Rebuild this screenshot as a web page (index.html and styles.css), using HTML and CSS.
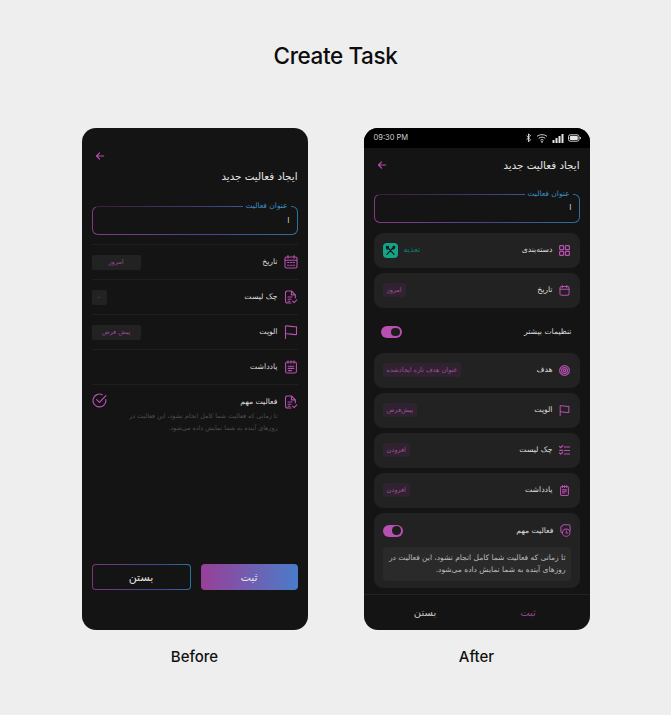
FILE: index.html
```html
<!DOCTYPE html>
<html lang="en">
<head>
<meta charset="utf-8">
<title>Create Task</title>
<link rel="stylesheet" href="styles.css">
</head>
<body>
<svg class="defs" width="0" height="0" aria-hidden="true">
  <defs>
    <symbol id="i-back" viewBox="0 0 12 12"><path d="M10.500 6H2M5.500 2.200 1.800 6l3.700 3.800"/></symbol>
    <symbol id="i-cal" viewBox="0 0 14 14"><rect x="1" y="2" width="12" height="11" rx="1.500"/><path d="M1 5.200h12M4 .6v2.600M10 .6v2.600"/><path class="dots" d="M3.500 7.500h1.400M6.300 7.500h1.400M9.100 7.500h1.400M3.500 10.200h1.400M6.300 10.200h1.400M9.100 10.200h1.400"/></symbol>
    <symbol id="i-cal2" viewBox="0 0 14 14"><rect x="1.200" y="2" width="11.600" height="11" rx="2"/><path d="M1.200 5.400h11.600M4.200.8v2.400M9.800.8v2.400"/></symbol>
    <symbol id="i-doc" viewBox="0 0 14 14"><path d="M7 13H3.200A1.700 1.700 0 0 1 1.500 11.300V2.700A1.700 1.700 0 0 1 3.200 1h4.300l3.800 3.800V8"/><path d="M7.400 1.200v3.700h3.700M4 7h4M4 9.300h3M4 11.300h2M8.600 11.200l1.500 1.500 2.700-2.900"/></symbol>
    <symbol id="i-flag" viewBox="0 0 14 14"><path d="M1.500 13.500V1c3.600-.6 7 1.300 11 .7v7.800c-4 .6-7.400-1.300-11-.7"/></symbol>
    <symbol id="i-note" viewBox="0 0 14 14"><rect x="1.600" y="2" width="10.800" height="11" rx="1.600"/><path d="M4 .7v2.600M7 .7v2.600M10 .7v2.600M4.200 6.200h5.600M4.200 8.400h5.600M4.200 10.600h3.400"/></symbol>
    <symbol id="i-check" viewBox="0 0 14 14"><path d="M12.900 6.200A6 6 0 1 1 9.600 1.600"/><path d="M4.300 6.200 7 8.800l6-6.400"/></symbol>
    <symbol id="i-grid" viewBox="0 0 12 12"><rect x=".7" y=".7" width="4.300" height="4.300" rx=".7"/><rect x="7" y=".7" width="4.300" height="4.300" rx=".7"/><rect x=".7" y="7" width="4.300" height="4.300" rx=".7"/><rect x="7" y="7" width="4.300" height="4.300" rx=".7"/></symbol>
    <symbol id="i-cut" viewBox="0 0 15 15"><path d="M3.400 3 11.600 12M11.600 3 3.400 12M10.400 2.800c1.300-.6 2.200 0 2 1.300-.2 1-1.200 1.800-2.400 1.500M3 2.600v2.200c0 .8.600 1.200 1.400 1.200M5 2.600v2.200"/></symbol>
    <symbol id="i-target" viewBox="0 0 12 12"><circle cx="6" cy="6" r="5.300"/><circle cx="6" cy="6" r="3.200"/><circle cx="6" cy="6" r="1.200"/></symbol>
    <symbol id="i-list" viewBox="0 0 12 12"><path d="M5.800 2.200h5.700M5.800 6h5.700M5.800 9.800h5.700M.6 1.600l1.300 1.300L4 .8M.6 8.700 1.900 10 4 7.900M.8 5.800h3"/></symbol>
    <symbol id="i-memo" viewBox="0 0 12 14"><rect x="1" y="2" width="10" height="11.300" rx="1.600"/><path d="M3.500 .8v2.400M6 .8v2.400M8.500 .8v2.400M3.400 6h5.200M3.400 8h5.200M3.400 10.200h3.200"/></symbol>
    <symbol id="i-clock" viewBox="0 0 14 14"><path d="M3.500 9.500 2 8.500V3.300L4.800 .8h5.400A1.800 1.800 0 0 1 12 2.600V7"/><circle cx="7.800" cy="9.300" r="4"/><path d="M7.800 7.400v2.200h1.700"/></symbol>
  </defs>
</svg>
<main class="page">
  <h1 class="page-title">Create Task</h1>
  <div class="compare">
    <section class="col">
      <div class="phone phone-before" dir="rtl">
        <div class="back-line"><svg class="ico ico-back"><use href="#i-back"/></svg></div>
        <h2 class="screen-title title-before">ایجاد فعالیت جدید</h2>
        <div class="field">
          <span class="field-label">عنوان فعالیت</span>
          <span class="field-value">ا</span>
        </div>
        <div class="plain-list">
          <div class="plain-row">
            <svg class="ico ico-big"><use href="#i-cal"/></svg>
            <span class="label">تاریخ</span>
            <span class="tag tag-wide">امروز</span>
          </div>
          <div class="plain-row">
            <svg class="ico ico-big"><use href="#i-doc"/></svg>
            <span class="label">چک لیست</span>
            <span class="tag tag-small">۰</span>
          </div>
          <div class="plain-row">
            <svg class="ico ico-big"><use href="#i-flag"/></svg>
            <span class="label">الویت</span>
            <span class="tag tag-wide">پیش فرض</span>
          </div>
          <div class="plain-row">
            <svg class="ico ico-big"><use href="#i-note"/></svg>
            <span class="label">یادداشت</span>
          </div>
          <div class="plain-row plain-important">
            <svg class="ico ico-big"><use href="#i-doc"/></svg>
            <div class="important-text">
              <span class="label">فعالیت مهم</span>
              <p class="muted">تا زمانی که فعالیت شما کامل انجام نشود، این فعالیت در روزهای آینده به شما نمایش داده می‌شود.</p>
            </div>
            <svg class="ico ico-circle"><use href="#i-check"/></svg>
          </div>
        </div>
        <div class="btn-row">
          <button class="btn btn-fill" type="button">ثبت</button>
          <button class="btn btn-outline" type="button">بستن</button>
        </div>
      </div>
      <p class="caption">Before</p>
    </section>

    <section class="col">
      <div class="phone phone-after">
        <div class="status">
          <span class="time">09:30 PM</span>
          <svg class="status-icons" viewBox="0 0 56 10" width="56" height="10">
            <path class="st" d="M1.500 2.800 5.500 6.700 3.500 8.800V.8l2 2.100-4 3.900"/>
            <path class="st" d="M12 3.400c2.800-2.300 7.200-2.300 10 0M13.700 5.300c1.900-1.500 4.700-1.500 6.600 0M15.400 7.200c.9-.7 2.300-.7 3.200 0"/>
            <circle class="sf" cx="17" cy="8.800" r=".9"/>
            <rect class="sf" x="27.500" y="7" width="2" height="3"/>
            <rect class="sf" x="30.500" y="5" width="2" height="5"/>
            <rect class="sf" x="33.500" y="3" width="2" height="7"/>
            <rect class="sf" x="36.500" y="1" width="2" height="9"/>
            <rect class="st" x="43.500" y="1.800" width="10.500" height="6.400" rx="1.800"/>
            <rect class="sf" x="44.800" y="3" width="8" height="4" rx="1"/>
            <rect class="sf" x="54.800" y="4" width="1" height="2"/>
          </svg>
        </div>
        <div class="after-body" dir="rtl">
          <div class="after-head">
            <h2 class="screen-title">ایجاد فعالیت جدید</h2>
            <svg class="ico ico-back"><use href="#i-back"/></svg>
          </div>
          <div class="field">
            <span class="field-label">عنوان فعالیت</span>
            <span class="field-value">ا</span>
          </div>
          <div class="stack">
            <div class="card">
              <svg class="ico ico-card"><use href="#i-grid"/></svg>
              <span class="label">دسته‌بندی</span>
              <span class="teal-text">تغذیه</span>
              <span class="teal-box"><svg class="ico-cut"><use href="#i-cut"/></svg></span>
            </div>
            <div class="card">
              <svg class="ico ico-card"><use href="#i-cal2"/></svg>
              <span class="label">تاریخ</span>
              <span class="chip">امروز</span>
            </div>
            <div class="toggle-line">
              <span class="label">تنظیمات بیشتر</span>
              <span class="switch"><span class="knob"></span></span>
            </div>
            <div class="card">
              <svg class="ico ico-card"><use href="#i-target"/></svg>
              <span class="label">هدف</span>
              <span class="chip">عنوان هدف تازه ایجادشده</span>
            </div>
            <div class="card">
              <svg class="ico ico-card"><use href="#i-flag"/></svg>
              <span class="label">الویت</span>
              <span class="chip">پیش‌فرض</span>
            </div>
            <div class="card">
              <svg class="ico ico-card"><use href="#i-list"/></svg>
              <span class="label">چک لیست</span>
              <span class="chip">افزودن</span>
            </div>
            <div class="card">
              <svg class="ico ico-card"><use href="#i-memo"/></svg>
              <span class="label">یادداشت</span>
              <span class="chip">افزودن</span>
            </div>
            <div class="card card-tall">
              <div class="card-top">
                <svg class="ico ico-clock"><use href="#i-clock"/></svg>
                <span class="label">فعالیت مهم</span>
                <span class="switch switch-inner"><span class="knob"></span></span>
              </div>
              <p class="info">تا زمانی که فعالیت شما کامل انجام نشود، این فعالیت در روزهای آینده به شما نمایش داده می‌شود.</p>
            </div>
          </div>
        </div>
        <div class="footer" dir="rtl">
          <span class="foot-main">ثبت</span>
          <span class="foot-close">بستن</span>
        </div>
      </div>
      <p class="caption">After</p>
    </section>
  </div>
</main>
</body>
</html>
```
FILE: styles.css
```css
* { box-sizing: border-box; }
html, body { margin: 0; padding: 0; }
body {
  background: #eeeeee;
  font-family: "DejaVu Sans", "Noto Sans", sans-serif;
  width: 671px;
  height: 715px;
  overflow: hidden;
}
.defs { position: absolute; }
.page {
  display: flex;
  flex-direction: column;
  align-items: center;
  padding-top: 41px;
}
.page-title {
  margin: 0 0 57px;
  height: 30px;
  font: 500 22.500px/30px Inter, sans-serif;
  color: #0c0c0c;
  letter-spacing: -0.4px;
}
.compare { display: flex; gap: 56px; }
.col { width: 226px; display: flex; flex-direction: column; align-items: center; }
.caption {
  margin: 18px 0 0;
  font: 500 15px/18px Inter, sans-serif;
  color: #111;
}
.phone {
  width: 226px;
  height: 502px;
  background: #141414;
  border-radius: 14px;
  overflow: hidden;
  display: flex;
  flex-direction: column;
}
.phone-before { padding: 0 10px; }

.ico {
  fill: none;
  stroke: #b84fb0;
  stroke-width: 1.100;
  stroke-linecap: round;
  stroke-linejoin: round;
  flex: none;
  display: block;
}
.back-line { height: 10px; margin-top: 23px; display: flex; justify-content: flex-end; padding-left: 3px; }
.ico-back { width: 10px; height: 10px; stroke-width: 1.300; }
.after-head .ico-back { margin-left: 3px; }
.screen-title {
  margin: 0;
  font-size: 10.300px;
  line-height: 14px;
  font-weight: 400;
  color: #e8e8e8;
}
.title-before { margin-top: 8px; }

.field {
  position: relative;
  height: 29px;
  border: 1px solid transparent;
  border-radius: 6px;
  background:
    linear-gradient(#141414, #141414) padding-box,
    linear-gradient(90deg, rgba(20, 20, 20, .7), rgba(20, 20, 20, 0) 75%) top / 100% 1px no-repeat border-box,
    linear-gradient(70deg, #843a80 0%, #47458f 55%, #2a749f 100%) border-box;
  display: flex;
  align-items: center;
  padding: 0 7px;
}
.phone-before .field { margin-top: 23px; }
.field-label {
  position: absolute;
  top: -6px;
  right: 6px;
  padding: 0 3px;
  background: #141414;
  font-size: 7.500px;
  line-height: 10px;
  color: #3d8fc4;
}
.field-value { font-size: 8px; line-height: 10px; color: #d8d8d8; }

.plain-list { margin-top: 9px; display: flex; flex-direction: column; }
.plain-row {
  height: 35px;
  border-top: 1px solid #1f1f1f;
  display: flex;
  align-items: center;
}
.ico-big { width: 14px; height: 14px; margin-left: 6px; }
.label { font-size: 7.700px; line-height: 12px; color: #dcdcdc; white-space: nowrap; }
.tag {
  margin-right: auto;
  height: 15px;
  border-radius: 2px;
  background: #222222;
  color: #9a4696;
  font-size: 6.500px;
  line-height: 15px;
  text-align: center;
  display: block;
}
.tag-wide { width: 49px; }
.tag-small { width: 15px; font-size: 8px; }
.plain-important { align-items: flex-start; height: 60px; padding-top: 10px; }
.important-text { width: 160px; }
.important-text .label { display: block; margin-top: 1px; }
.muted {
  margin: 2px 0 0;
  font-size: 6.300px;
  line-height: 12px;
  color: #4f4f4f;
}
.ico-circle { width: 15px; height: 15px; margin-right: auto; margin-top: -2px; stroke-width: 1.100; }

.btn-row { margin-top: auto; margin-bottom: 40px; display: flex; gap: 10px; }
.btn {
  flex: 1;
  height: 26px;
  border-radius: 4px;
  font-family: inherit;
  font-size: 11px;
  color: #e6e6e6;
  padding: 0;
}
.btn-fill {
  border: 0;
  background: linear-gradient(90deg, #983f98, #4a7cc9);
}
.btn-outline {
  border: 1px solid transparent;
  background:
    linear-gradient(#141414, #141414) padding-box,
    linear-gradient(90deg, #7d3679, #3a4a92 70%, #2a749f) border-box;
}

.status {
  height: 20px;
  background: #000;
  flex: none;
  display: flex;
  align-items: center;
  justify-content: space-between;
  padding: 0 9px 0 10px;
}
.time { font: 400 7.500px/10px Inter, sans-serif; color: #cfcfcf; }
.st { fill: none; stroke: #e6e6e6; stroke-width: .9; }
.sf { fill: #e6e6e6; }

.after-body { padding: 0 10px; flex: none; }
.after-head {
  height: 20px;
  margin-top: 7px;
  display: flex;
  align-items: center;
  justify-content: space-between;
}
.after-body .field { margin-top: 18.500px; height: 29px; }
.stack { margin-top: 10px; display: flex; flex-direction: column; gap: 5px; }
.card {
  height: 35px;
  background: #222222;
  border-radius: 9px;
  padding: 0 10px 0 9px;
  display: flex;
  align-items: center;
}
.ico-card { width: 11px; height: 11px; margin-left: 6px; stroke-width: 1.300; }
.chip {
  margin-right: auto;
  height: 14px;
  padding: 0 4px;
  border-radius: 2px;
  background: #2f2330;
  color: #a24b9e;
  font-size: 6.500px;
  line-height: 14px;
  white-space: nowrap;
}
.teal-text {
  margin-right: auto;
  font-size: 8px;
  line-height: 10px;
  color: #0f7f76;
}
.teal-box {
  margin-right: 6px;
  width: 15px;
  height: 15px;
  border-radius: 4px;
  background: #13a386;
  display: flex;
  align-items: center;
  justify-content: center;
}
.ico-cut { width: 13px; height: 13px; fill: none; stroke: #111; stroke-width: 1.300; stroke-linecap: round; }
.toggle-line {
  height: 35px;
  padding: 4px 8px 0 7px;
  display: flex;
  align-items: center;
  justify-content: space-between;
}
.switch {
  width: 21px;
  height: 12px;
  border-radius: 6px;
  background: #b84fb2;
  display: flex;
  align-items: center;
  justify-content: flex-end;
  padding: 0 2px;
  direction: ltr;
}
.knob { width: 8.500px; height: 8.500px; border-radius: 50%; background: #1d1d1d; }
.card-tall {
  height: 75px;
  display: block;
  padding: 0 9px;
}
.card-top { height: 34px; display: flex; align-items: center; padding: 2px 0 0; margin-right: -1px; }
.ico-clock { width: 13px; height: 13px; margin-left: 5px; }
.switch-inner { margin-right: auto; width: 20px; }
.info {
  margin: 0;
  height: 34px;
  padding: 5px 5px;
  background: #2a2a2a;
  border-radius: 4px;
  font-size: 7.500px;
  line-height: 12px;
  color: #bdbdbd;
}
.footer {
  margin-top: 6px;
  flex: 1;
  border-top: 1px solid #232323;
  padding: 0 10px;
  display: grid;
  grid-template-columns: 1fr 1fr;
  align-items: center;
  text-align: center;
  font-size: 10px;
}
.foot-main { color: #8f4490; }
.foot-close { color: #c4c4c4; }
```
